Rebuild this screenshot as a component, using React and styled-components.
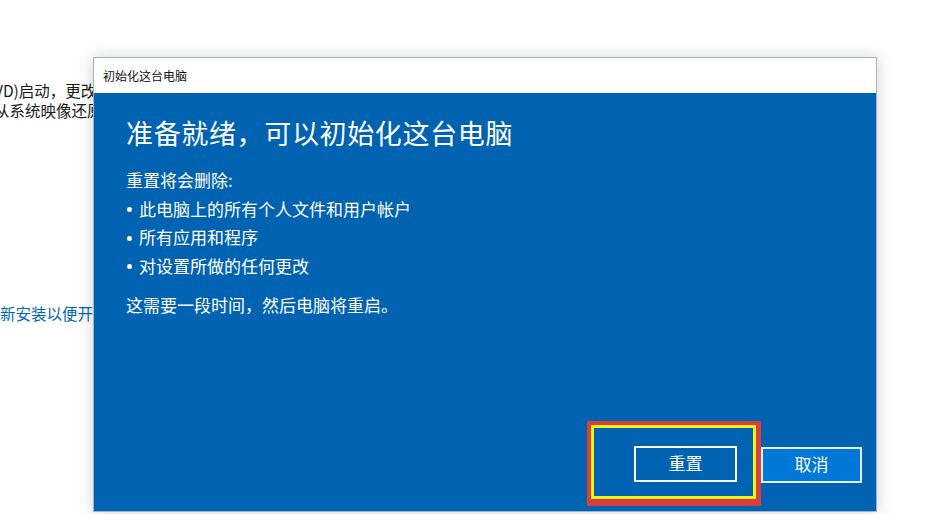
import React from "react";
import styled, { createGlobalStyle } from "styled-components";

const Global = createGlobalStyle`
  html, body { margin: 0; padding: 0; background: #ffffff; }
  body {
    width: 929px; height: 514px; overflow: hidden;
    font-family: "Noto Sans CJK SC", "Noto Sans", sans-serif;
  }
`;

const Page = styled.div`
  position: relative;
  width: 929px;
  height: 514px;
  overflow: hidden;
  background: #fff;
`;

const Behind = styled.div`
  display: flex;
  flex-direction: column;
  padding-top: 80px;
  font-size: 15.5px;
  line-height: 20px;
  color: #1a1a1a;
`;

const BehindLine = styled.div`
  white-space: nowrap;
  margin-left: ${(p) => p.$shift}px;
  margin-top: ${(p) => p.$gap || 0}px;
  color: ${(p) => (p.$link ? "#0067c0" : "#1a1a1a")};
`;

const Dialog = styled.div`
  position: absolute;
  left: 93px;
  top: 57px;
  width: 782px;
  height: 453px;
  border: 1px solid #9db5cf;
  box-shadow: 0 0 16px rgba(0, 0, 0, 0.18);
  display: flex;
  flex-direction: column;
  background: #0063b1;
`;

const TitleBar = styled.div`
  height: 35px;
  background: #ffffff;
  display: flex;
  align-items: center;
  padding-left: 9px;
  font-size: 12px;
  color: #111;
`;

const Body = styled.div`
  flex: 1;
  display: flex;
  flex-direction: column;
  padding: 22px 14px 5px 32px;
  color: #ffffff;
`;

const Heading = styled.h1`
  margin: 0;
  font-size: 27px;
  font-weight: 400;
  line-height: 35px;
  letter-spacing: 0.65px;
`;

const Text = styled.p`
  margin: ${(p) => p.$top}px 0 0;
  font-size: 17px;
  line-height: 28.7px;
`;

const List = styled.ul`
  margin: 0;
  padding: 0;
  list-style: none;
`;

const Item = styled.li`
  display: flex;
  align-items: center;
  font-size: 17px;
  line-height: 28.7px;
  &::before {
    content: "";
    flex: none;
    width: 5px;
    height: 5px;
    border-radius: 50%;
    background: #ffffff;
    margin: 1px 7px 0 1px;
  }
`;

const Footer = styled.div`
  margin-top: auto;
  display: flex;
  justify-content: flex-end;
  align-items: flex-start;
`;

const RedMark = styled.div`
  border: 4px solid #d9403c;
  border-right-width: 5px;
  border-bottom-width: 7px;
  display: flex;
`;

const YellowMark = styled.div`
  border: 3px solid #f2f21c;
  padding: 18px 16px 14px 40px;
  display: flex;
`;

const Button = styled.button`
  width: ${(p) => p.$w}px;
  height: 36px;
  margin-top: ${(p) => p.$top || 0}px;
  border: 2px solid ${(p) => (p.$primary ? "#e8eef5" : "#ffffff")};
  background: ${(p) => (p.$primary ? "#0078d7" : "transparent")};
  color: #ffffff;
  font-family: "Noto Sans CJK SC", sans-serif;
  font-size: 17px;
  line-height: 30px;
  padding: 0 0 2px;
  cursor: pointer;
`;

export default function App() {
  return (
    <Page>
      <Global />
      <Behind>
        <BehindLine $shift={-6}>VD)启动，更改电脑的固件设置</BehindLine>
        <BehindLine $shift={-6}>从系统映像还原 Windows</BehindLine>
        <BehindLine $shift={0} $gap={183} $link>新安装以便开始使用</BehindLine>
      </Behind>
      <Dialog>
        <TitleBar>初始化这台电脑</TitleBar>
        <Body>
          <Heading>准备就绪，可以初始化这台电脑</Heading>
          <Text $top={16}>重置将会删除:</Text>
          <List>
            <Item>此电脑上的所有个人文件和用户帐户</Item>
            <Item>所有应用和程序</Item>
            <Item>对设置所做的任何更改</Item>
          </List>
          <Text $top={10}>这需要一段时间，然后电脑将重启。</Text>
          <Footer>
            <RedMark>
              <YellowMark>
                <Button $w={103}>重置</Button>
              </YellowMark>
            </RedMark>
            <Button $w={101} $top={26} $primary>
              取消
            </Button>
          </Footer>
        </Body>
      </Dialog>
    </Page>
  );
}
